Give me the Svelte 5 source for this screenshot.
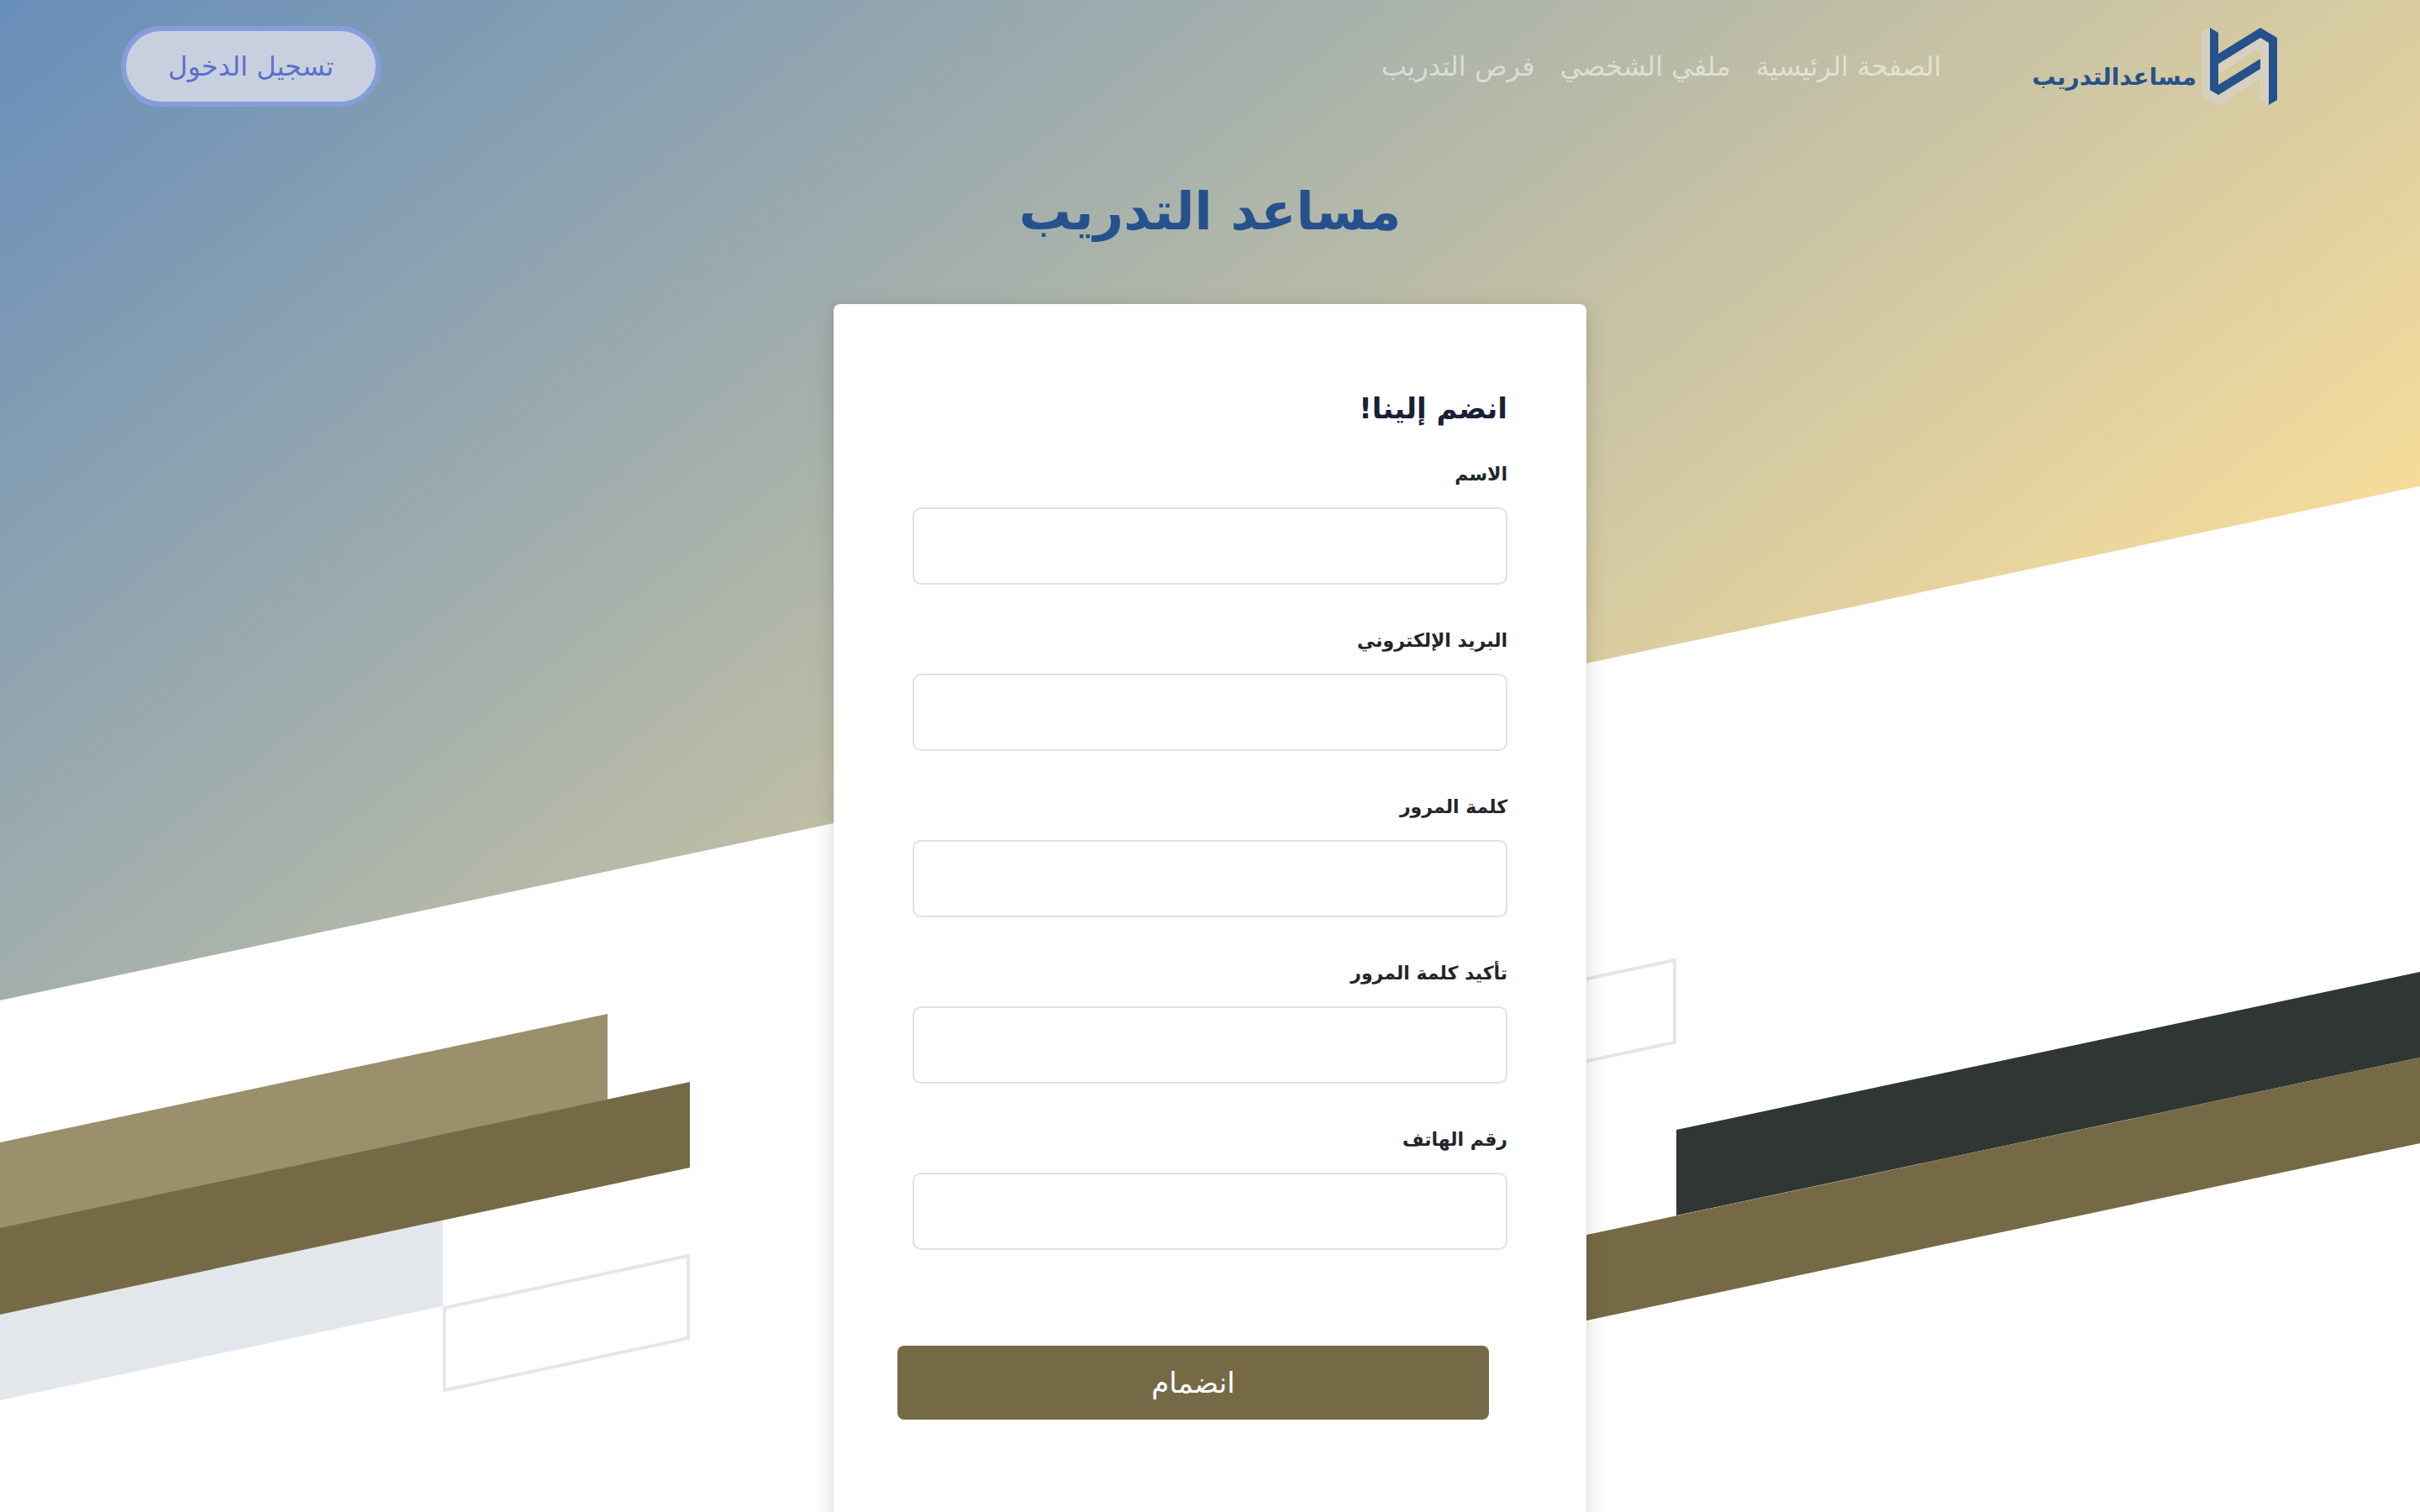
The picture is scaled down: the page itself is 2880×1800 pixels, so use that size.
<script lang="ts">
  const links = ['الصفحة الرئيسية', 'ملفي الشخصي', 'فرص التدريب'];
  const fields = [
    { id: 'name', label: 'الاسم', type: 'text' },
    { id: 'email', label: 'البريد الإلكتروني', type: 'email' },
    { id: 'password', label: 'كلمة المرور', type: 'password' },
    { id: 'confirm', label: 'تأكيد كلمة المرور', type: 'password' },
    { id: 'phone', label: 'رقم الهاتف', type: 'tel' },
  ];
</script>

<div class="page" dir="rtl">
  <div class="backdrop" aria-hidden="true">
    <div class="sky"></div>
    <svg class="bars" viewBox="0 0 2880 1800" preserveAspectRatio="none">
      <polygon fill="#e3e7ec" points="0,1565 527,1453 527,1555 0,1667" />
      <polygon fill="#9b8f6c" points="0,1360 723,1207 723,1309 0,1463" />
      <polygon fill="#766a46" points="0,1462 821,1288 821,1390 0,1565" />
      <polygon fill="none" stroke="#e3e7ec" stroke-width="4" points="529,1557 819,1495 819,1593 529,1655" />
      <polygon fill="none" stroke="#e3e7ec" stroke-width="4" points="1702,1205 1993,1143 1993,1241 1702,1303" />
      <polygon fill="#303633" points="1995,1345 2880,1157 2880,1259 1995,1447" />
      <polygon fill="#766a46" points="1700,1510 2880,1259 2880,1361 1700,1612" />
    </svg>
  </div>

  <header>
    <a class="brand" href="#home">
      <svg class="mark" viewBox="0 0 90 92" aria-hidden="true">
        <path fill="#d7d0c0" d="M0 6 10 0V74L20 80 70 49V61L20 92 0 80Z" />
        <path fill="#d7d0c0" d="M20 43 70 12 80 18V92L70 86V24L20 55Z" />
        <path fill="#25518d" d="M10 0 20 6V31L70 0 90 12V86L80 92V18L70 12 20 43V68L70 37V49L20 80 10 74Z" />
      </svg>
      <span>مساعدالتدريب</span>
    </a>
    <nav>
      {#each links as link}
        <a href="#section">{link}</a>
      {/each}
    </nav>
    <button class="login" type="button">تسجيل الدخول</button>
  </header>

  <main>
    <h1>مساعد التدريب</h1>
    <form>
      <h2>انضم إلينا!</h2>
      {#each fields as field}
        <label for={field.id}>{field.label}</label>
        <input id={field.id} type={field.type} />
      {/each}
      <button class="join" type="button">انضمام</button>
    </form>
  </main>
</div>

<style>
  :global(body) {
    margin: 0;
    background: #fff;
  }
  .page {
    position: relative;
    height: 100vh;
    overflow: hidden;
    font-family: 'DejaVu Sans', sans-serif;
    color: #212529;
  }
  .backdrop {
    position: absolute;
    inset: 0;
    overflow: hidden;
  }
  .sky {
    height: 1191px;
    transform: skewY(-12deg);
    transform-origin: 0 0;
    background: linear-gradient(150deg, #678eba 0%, #a3afac 42%, #f6dc9b 100%);
  }
  .bars {
    position: absolute;
    inset: 0;
    width: 100%;
    height: 100%;
  }
  header {
    position: relative;
    display: flex;
    align-items: center;
    height: 158px;
    padding: 0 170px 0 144px;
  }
  .brand {
    display: flex;
    align-items: center;
    gap: 6px;
    color: #25518d;
    font-size: 28px;
    font-weight: 700;
    text-decoration: none;
  }
  .brand span {
    padding-top: 24px;
  }
  .mark {
    width: 90px;
    height: 92px;
  }
  nav {
    display: flex;
    flex: 1;
    gap: 30px;
    margin-right: 108px;
  }
  nav a {
    color: rgba(255, 255, 255, 0.55);
    font-size: 32px;
    text-decoration: none;
  }
  .login {
    height: 96px;
    padding: 0 50px;
    border: 6px solid #879ddb;
    border-radius: 48px;
    background: #c8d0e0;
    color: #5b70c9;
    font: 32px 'DejaVu Sans', sans-serif;
  }
  main {
    position: relative;
    display: flex;
    flex-direction: column;
    align-items: center;
  }
  h1 {
    margin: 0 0 16px;
    color: #25518d;
    font-size: 62px;
    line-height: 188px;
  }
  form {
    box-sizing: border-box;
    width: 896px;
    min-height: 1500px;
    padding: 88px 94px;
    border-radius: 8px;
    background: #fff;
    box-shadow: 0 8px 30px rgba(0, 0, 0, 0.12), 0 2px 8px rgba(0, 0, 0, 0.08);
  }
  h2 {
    margin: 0 0 8px;
    color: #1a1f36;
    font-size: 34px;
    line-height: 72px;
  }
  label {
    display: block;
    height: 74px;
    font-size: 22px;
    font-weight: 700;
    line-height: 70px;
  }
  input {
    display: block;
    box-sizing: border-box;
    width: 100%;
    height: 92px;
    margin: 0 0 32px;
    padding: 0 24px;
    border: 2px solid #e0e1e6;
    border-radius: 10px;
    background: #fff;
    font: 32px 'DejaVu Sans', sans-serif;
  }
  .join {
    display: block;
    width: 704px;
    height: 88px;
    margin: 114px 22px 0 0;
    border: 0;
    border-radius: 8px;
    background: #766a46;
    color: #fff;
    font: 34px 'DejaVu Sans', sans-serif;
  }
</style>
